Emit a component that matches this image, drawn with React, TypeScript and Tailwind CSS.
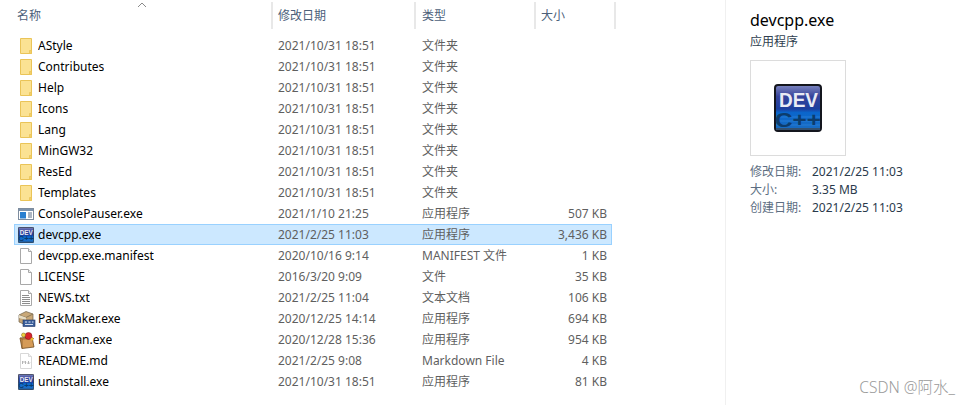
const rows = [
  { name: "AStyle", date: "2021/10/31 18:51", type: "文件夹", size: "", icon: "folder" },
  { name: "Contributes", date: "2021/10/31 18:51", type: "文件夹", size: "", icon: "folder" },
  { name: "Help", date: "2021/10/31 18:51", type: "文件夹", size: "", icon: "folder" },
  { name: "Icons", date: "2021/10/31 18:51", type: "文件夹", size: "", icon: "folder" },
  { name: "Lang", date: "2021/10/31 18:51", type: "文件夹", size: "", icon: "folder" },
  { name: "MinGW32", date: "2021/10/31 18:51", type: "文件夹", size: "", icon: "folder" },
  { name: "ResEd", date: "2021/10/31 18:51", type: "文件夹", size: "", icon: "folder" },
  { name: "Templates", date: "2021/10/31 18:51", type: "文件夹", size: "", icon: "folder" },
  { name: "ConsolePauser.exe", date: "2021/1/10 21:25", type: "应用程序", size: "507 KB", icon: "console" },
  { name: "devcpp.exe", date: "2021/2/25 11:03", type: "应用程序", size: "3,436 KB", icon: "dev", selected: true },
  { name: "devcpp.exe.manifest", date: "2020/10/16 9:14", type: "MANIFEST 文件", size: "1 KB", icon: "file" },
  { name: "LICENSE", date: "2016/3/20 9:09", type: "文件", size: "35 KB", icon: "file" },
  { name: "NEWS.txt", date: "2021/2/25 11:04", type: "文本文档", size: "106 KB", icon: "text" },
  { name: "PackMaker.exe", date: "2020/12/25 14:14", type: "应用程序", size: "694 KB", icon: "packmaker" },
  { name: "Packman.exe", date: "2020/12/28 15:36", type: "应用程序", size: "954 KB", icon: "packman" },
  { name: "README.md", date: "2021/2/25 9:08", type: "Markdown File", size: "4 KB", icon: "md" },
  { name: "uninstall.exe", date: "2021/10/31 18:51", type: "应用程序", size: "81 KB", icon: "dev" },
];

const columns = [
  { label: "名称", width: "w-[273px] pl-[17px]" },
  { label: "修改日期", width: "w-[143px] pl-[5px]" },
  { label: "类型", width: "w-[120px] pl-[6px]" },
  { label: "大小", width: "w-[80px] pl-[5px]" },
];

function DevIcon({ size }: { size: number }) {
  return (
    <svg width={size} height={size} viewBox="0 0 48 48" className="shrink-0">
      <defs>
        <linearGradient id="devbg" x1="0" y1="0" x2="0" y2="1">
          <stop offset="0" stopColor="#7d86c0" />
          <stop offset="0.25" stopColor="#36439a" />
          <stop offset="0.52" stopColor="#1c3f9e" />
          <stop offset="0.6" stopColor="#0a66cc" />
          <stop offset="1" stopColor="#1a6cc0" />
        </linearGradient>
      </defs>
      <rect x="1" y="1" width="46" height="46" rx="3" fill="url(#devbg)" stroke="#14161e" strokeWidth="2" />
      <path d="M2 33h44M2 37h44M2 41h44" stroke="#2b80d8" strokeWidth="0.8" />
      <text x="5" y="23" textLength="39" lengthAdjust="spacingAndGlyphs" fontFamily="'Liberation Sans', sans-serif" fontWeight="700" fontSize="20" fill="#e9ebf4">
        DEV
      </text>
      <text x="1" y="43" textLength="46" lengthAdjust="spacingAndGlyphs" fontFamily="'Liberation Sans', sans-serif" fontWeight="700" fontSize="21" fill="#0c3c6c">
        C++
      </text>
      <rect x="2" y="44" width="44" height="2" fill="#33506f" />
    </svg>
  );
}

function RowIcon({ kind }: { kind: string }) {
  if (kind === "folder") {
    return (
      <svg width="16" height="16" viewBox="0 0 16 16" className="shrink-0">
        <path d="M2.500.500h11v15h-11z" fill="#fbe293" stroke="#eac458" />
        <path d="M11.500 15.500v-3h2v3z" fill="#f3cf68" stroke="#eac458" strokeWidth="0.8" />
      </svg>
    );
  }
  if (kind === "file" || kind === "md" || kind === "text") {
    const line = kind === "md" ? "#d8d8d8" : "#a8a8a8";
    return (
      <svg width="16" height="16" viewBox="0 0 16 16" className="shrink-0">
        <path d="M2.500.500h8l3 3v12h-11z" fill="#fff" stroke={line} />
        <path d="M10.500.500v3h3" fill="#f1f1f1" stroke={line} />
        {kind === "text" && <path d="M4 5.500h7M4 7.500h8M4 9.500h8M4 11.500h8M4 13.500h8" stroke="#8d8d8d" />}
        {kind === "md" && <path d="M4.500 11V8l1.500 1.500L7.500 8v3M10.500 8v3M9 9.500l1.500 1.500L12 9.500" stroke="#b5b5b5" fill="none" />}
      </svg>
    );
  }
  if (kind === "console") {
    return (
      <svg width="16" height="16" viewBox="0 0 16 16" className="shrink-0">
        <rect x="0.500" y="2.500" width="15" height="11" fill="#fff" stroke="#7d8c9e" />
        <rect x="1" y="3" width="14" height="2" fill="#7d93ad" />
        <rect x="2" y="6" width="6" height="6.500" fill="#2a7fd0" />
        <path d="M10 7h4M10 9h4M10 11h4" stroke="#5a6f88" />
      </svg>
    );
  }
  if (kind === "packmaker") {
    return (
      <svg width="18" height="16" viewBox="0 0 18 16" className="shrink-0">
        <path d="M1 4l7-3.500L15 3v8l-7 3-7-3z" fill="#c9a878" stroke="#6f6048" strokeWidth="0.7" />
        <path d="M1 4l7 2.500L15 3" fill="none" stroke="#8a7858" />
        <path d="M1 4v3l7 2V6.500z" fill="#e6dcc4" />
        <rect x="5" y="9" width="12" height="6.500" fill="#3b5f9a" stroke="#23355f" strokeWidth="0.6" />
        <path d="M7 11h2M10.500 11h2M14 11h1.500M7 13.500h8" stroke="#d8e0f0" />
      </svg>
    );
  }
  if (kind === "packman") {
    return (
      <svg width="18" height="18" viewBox="0 0 18 18" className="shrink-0">
        <path d="M2 7l12-1 2 10-12 1.500z" fill="#d59b57" stroke="#6e4a20" strokeWidth="0.8" />
        <path d="M4 17.500V8M2 7l2 1 12-.5" fill="none" stroke="#8a5d2c" strokeWidth="0.8" />
        <circle cx="10.500" cy="5" r="3.500" fill="#d8232a" stroke="#7a1014" strokeWidth="0.5" />
        <circle cx="5.500" cy="4" r="2" fill="#f0d040" stroke="#70601a" strokeWidth="0.5" />
        <circle cx="14" cy="8" r="1.500" fill="#e9b92e" />
      </svg>
    );
  }
  return <DevIcon size={16} />;
}

export default function App() {
  return (
    <div
      className="flex h-[405px] w-[970px] overflow-hidden bg-white text-[12px] text-[#1a1a1a]"
      style={{ fontFamily: "'Noto Sans', 'Noto Sans CJK SC', sans-serif" }}
    >
      <div className="w-[726px] shrink-0 border-r border-[#f0f0f0]">
        {/* Column headers */}
        <div className="relative mt-[2px] flex h-[27px] text-[#4c607a]">
          {columns.map((c) => (
            <div key={c.label} className={`${c.width} flex items-center border-r-2 border-[#e8e8e8]`}>
              {c.label}
            </div>
          ))}
          <svg width="10" height="6" viewBox="0 0 10 6" className="absolute left-[137px] top-[0px]">
            <path d="M1 5l4-4 4 4" fill="none" stroke="#8a8a8a" />
          </svg>
        </div>

        <div className="ml-[14px] mt-[6px] w-[598px]">
          {rows.map((r) => (
            <div
              key={r.name}
              className={`flex h-[21px] items-center border ${
                r.selected ? "border-[#99d1ff] bg-[#cce8ff]" : "border-transparent"
              }`}
            >
              <div className="flex w-[257px] items-center">
                <div className="flex w-[23px] justify-start pl-[3px]">
                  <RowIcon kind={r.icon} />
                </div>
                <span className="truncate text-black">{r.name}</span>
              </div>
              <div className="w-[144px] pl-[6px] text-[#5f5f5f]">{r.date}</div>
              <div className="w-[112px] pl-[6px] text-[#5f5f5f]">{r.type}</div>
              <div className="w-[83px] pr-[4px] text-right text-[#5f5f5f]">{r.size}</div>
            </div>
          ))}
        </div>
      </div>

      {/* Details pane */}
      <div className="relative flex-1 pl-[24px] pt-[9px]">
        <div className="text-[16px] leading-[22px] text-black">devcpp.exe</div>
        <div className="mt-[1px] leading-[19px] text-[#303f50]">应用程序</div>
        <div className="mt-[9px] flex h-[96px] w-[96px] items-center justify-center border border-[#dcdcdc]">
          <DevIcon size={48} />
        </div>
        <div className="mt-[7px] grid grid-cols-[62px_1fr] leading-[18px]">
          <span className="text-[#5d6e82]">修改日期:</span>
          <span className="text-[#2a3a4c]">2021/2/25 11:03</span>
          <span className="text-[#5d6e82]">大小:</span>
          <span className="text-[#2a3a4c]">3.35 MB</span>
          <span className="text-[#5d6e82]">创建日期:</span>
          <span className="text-[#2a3a4c]">2021/2/25 11:03</span>
        </div>
        <div className="absolute bottom-[7px] right-[15px] text-[15.5px] font-light leading-[22px] text-[#9a9a9a]">CSDN @阿水_</div>
      </div>
    </div>
  );
}
